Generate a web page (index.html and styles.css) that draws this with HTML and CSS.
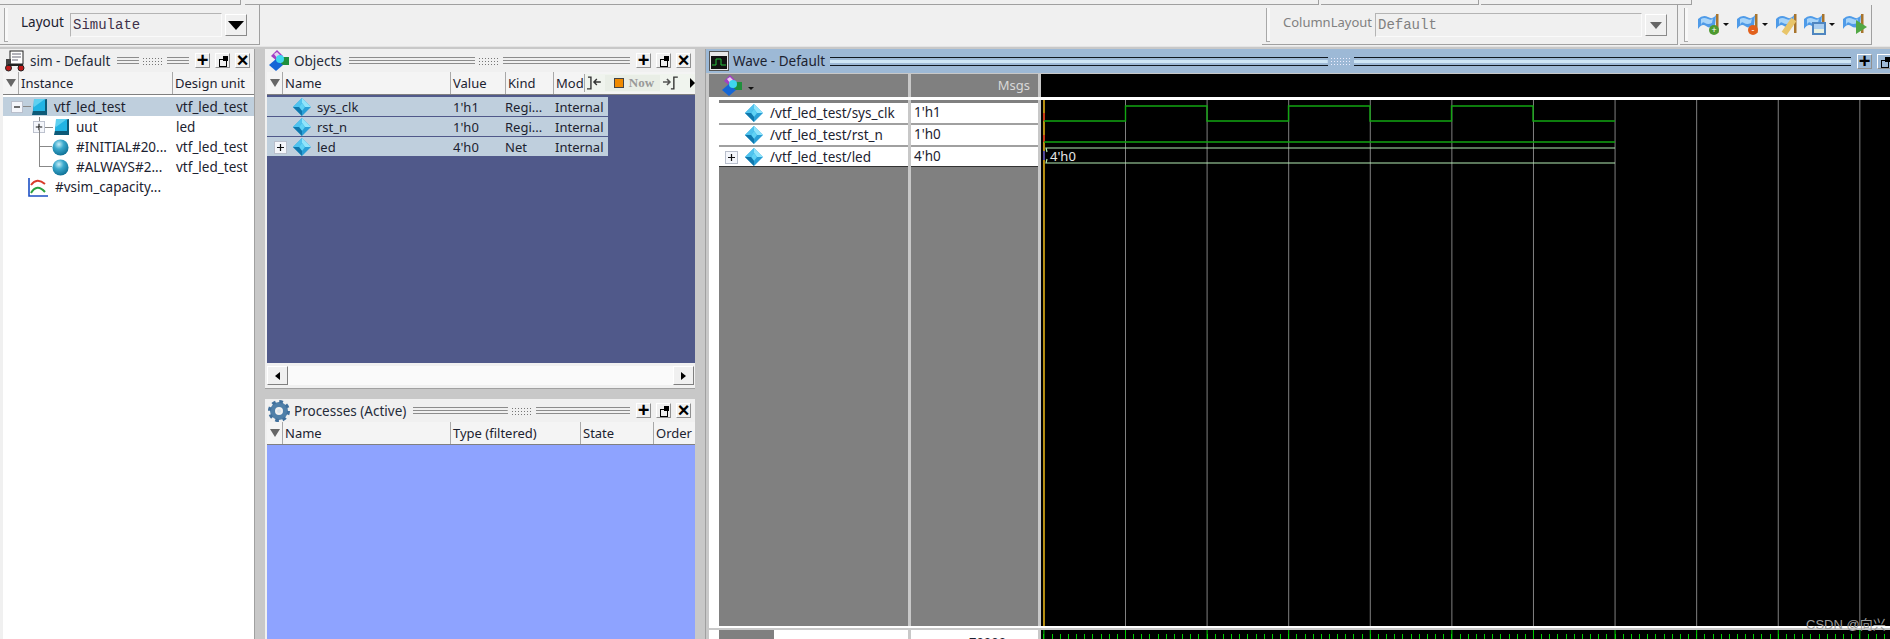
FILE: index.html
```html
<!DOCTYPE html>
<html lang="en">
<head>
  <meta charset="UTF-8" />
  <title>Simulate</title>
  <link rel="stylesheet" href="styles.css">
</head>
<body>
  <svg class="defs" width="0" height="0">
    <defs>
      <symbol id="diamond" viewBox="0 0 20 20">
        <path d="M10 1 L19 10 L10 19 L1 10Z" fill="#2a9fd6"/>
        <path d="M10 1 L19 10 L13 10 L10 6Z" fill="#8fe4fb"/>
        <path d="M10 1 L1 10 L7 10 L10 6Z" fill="#4fc3ee"/>
        <path d="M10 6 L13 10 L10 14 L7 10Z" fill="#5fd2f5"/>
        <path d="M1 10 L10 19 L10 14 L7 10Z" fill="#0f78ad"/>
      </symbol>
      <symbol id="cube" viewBox="0 0 16 16">
        <path d="M1 16 L4 2 L16 0 V16Z" fill="#0d5a78"/>
        <path d="M3 0 H14 V12 H2Z" fill="#22b4e4"/>
        <path d="M3 0 H14 L3 8Z" fill="#5fd0f0"/>
      </symbol>
      <radialGradient id="ball" cx="0.4" cy="0.3" r="0.75">
        <stop offset="0" stop-color="#c8eef7"/>
        <stop offset="0.4" stop-color="#3ba9cd"/>
        <stop offset="1" stop-color="#0b6b90"/>
      </radialGradient>
      <symbol id="sphere" viewBox="0 0 18 18">
        <circle cx="9" cy="9" r="8.5" fill="url(#ball)"/>
      </symbol>
      <symbol id="objects" viewBox="0 0 22 22">
        <path d="M9 0 L15 6 L9 11 L3 6Z" fill="#a23fc4"/>
        <path d="M6 4 L9 2 L12 5 L9 8Z" fill="#e8d0f0"/>
        <path d="M13 7 H21 V15 H13Z" fill="#1f8f3c"/>
        <path d="M8 9 L15 15 L8 21 L1 15Z" fill="#1566d6"/>
        <circle cx="12" cy="9" r="4" fill="#3fd6ee"/>
      </symbol>
      <symbol id="flag" viewBox="0 0 22 20">
        <path d="M0 5 Q5 0 10 3 T18 1 L17 12 Q12 15 8 12 T0 15Z" fill="#4f9be8"/>
        <path d="M3 5 Q6 3 10 5 T15 4 L14 9 Q10 11 7 9 T3 11Z" fill="#a8d4f8"/>
        <path d="M18 0 H20.5 V19 H18Z" fill="#a8742c"/>
      </symbol>
      <symbol id="plusbox" viewBox="0 0 13 13">
        <rect x="0.5" y="0.5" width="12" height="12" fill="#f4f6fb" stroke="#b9bfcc"/>
        <path d="M3 6.5 H10 M6.5 3 V10" stroke="#111" stroke-width="1.2"/>
      </symbol>
    </defs>
  </svg>

  <div class="top-strip">
    <span class="seg s1"></span><span class="seg s2"></span><span class="seg s3"></span><span class="seg s4"></span>
  </div>

  <div class="toolbar">
    <div class="tool tool-layout">
      <span class="handle"></span>
      <span class="tool-label">Layout</span>
      <span class="combo">Simulate</span>
      <span class="drop"><i class="tri"></i></span>
    </div>
    <div class="tool-space"></div>
    <div class="tool tool-column">
      <span class="handle"></span>
      <span class="tool-label muted">ColumnLayout</span>
      <span class="combo combo-wide muted">Default</span>
      <span class="drop"><i class="tri tri-hatch"></i></span>
    </div>
    <div class="tool tool-flags">
      <span class="handle"></span>
      <span class="flag"><svg width="22" height="20"><use href="#flag"/></svg><i class="badge green">+</i></span><i class="caret"></i>
      <span class="flag"><svg width="22" height="20"><use href="#flag"/></svg><i class="badge orange">-</i></span><i class="caret"></i>
      <span class="flag"><svg width="22" height="20"><use href="#flag"/></svg><i class="pencil"></i></span>
      <span class="flag"><svg width="22" height="20"><use href="#flag"/></svg><i class="disk"></i></span><i class="caret"></i>
      <span class="flag"><svg width="22" height="20"><use href="#flag"/></svg><i class="arrow"></i></span>
    </div>
  </div>

  <div class="workspace">
    <section class="panel panel-sim">
      <header class="titlebar">
        <svg class="title-icon" width="22" height="22" viewBox="0 0 22 22">
          <rect x="6" y="1" width="13" height="13" fill="#fff" stroke="#222"/>
          <path d="M8 4 H17 M8 7 H17 M8 10 H14" stroke="#667"/>
          <path d="M2 9 H7 V16 H2Z" fill="#444"/>
          <circle cx="4.5" cy="18" r="3" fill="#c01818" stroke="#222"/>
          <circle cx="17" cy="18" r="3" fill="#c01818" stroke="#222"/>
          <path d="M4 15 H19" stroke="#222" stroke-width="2"/>
        </svg>
        <span class="title-text">sim - Default</span>
        <div class="grip"><span></span><b></b><span></span></div>
        <div class="win-btns"><span class="btn">+</span><span class="btn btn-undock"></span><span class="btn btn-x">×</span></div>
      </header>
      <div class="cols">
        <span class="filter"><i></i></span>
        <span class="col col-instance">Instance</span>
        <span class="col">Design unit</span>
      </div>
      <div class="tree">
        <div class="tree-row selected">
          <svg class="pm pm-root" width="12" height="12"><rect x="0.5" y="0.5" width="11" height="11" fill="#f4f6fb" stroke="#b9bfcc"/><path d="M3 6 H9" stroke="#111" stroke-width="1.2"/></svg>
          <span class="tick"></span>
          <svg class="node" width="16" height="16"><use href="#cube"/></svg>
          <span class="name name-root">vtf_led_test</span>
          <span class="unit">vtf_led_test</span>
        </div>
        <div class="tree-row">
          <span class="stem"></span>
          <svg class="pm pm-child" width="12" height="12"><use href="#plusbox"/></svg>
          <span class="tick"></span>
          <svg class="node" width="16" height="16"><use href="#cube"/></svg>
          <span class="name name-1">uut</span>
          <span class="unit">led</span>
        </div>
        <div class="tree-row">
          <span class="elbow"></span>
          <svg class="node" width="17" height="17"><use href="#sphere"/></svg>
          <span class="name name-1">#INITIAL#20...</span>
          <span class="unit">vtf_led_test</span>
        </div>
        <div class="tree-row">
          <span class="elbow"></span>
          <svg class="node" width="17" height="17"><use href="#sphere"/></svg>
          <span class="name name-1">#ALWAYS#2...</span>
          <span class="unit">vtf_led_test</span>
        </div>
        <div class="tree-row">
          <svg class="node chart" width="20" height="20" viewBox="0 0 20 20">
            <path d="M1 1 V19 H20" stroke="#1c4fc4" stroke-width="1.6" fill="none"/>
            <path d="M3 8 Q9 0 17 7" stroke="#d83a2a" stroke-width="2" fill="none"/>
            <path d="M3 16 Q9 6 17 15" stroke="#2aa040" stroke-width="2" fill="none"/>
          </svg>
          <span class="name">#vsim_capacity...</span>
        </div>
      </div>
    </section>

    <div class="middle">
      <section class="panel panel-objects">
        <header class="titlebar">
          <svg class="title-icon" width="22" height="22"><use href="#objects"/></svg>
          <span class="title-text">Objects</span>
          <div class="grip"><span></span><b></b><span></span></div>
          <div class="win-btns"><span class="btn">+</span><span class="btn btn-undock"></span><span class="btn btn-x">×</span></div>
        </header>
        <div class="cols">
          <span class="filter"><i></i></span>
          <span class="col col-name">Name</span>
          <span class="col col-value">Value</span>
          <span class="col col-kind">Kind</span>
          <span class="col">Mode</span>
          <div class="now-bar">
            <svg width="18" height="16" viewBox="0 0 18 16"><path d="M2 14 H6 V2 H3 M16 7 H9 M12 4 L9 7 L12 10" stroke="#333" stroke-width="1.4" fill="none"/></svg>
            <span class="now"><i></i>Now</span>
            <svg width="18" height="16" viewBox="0 0 18 16"><path d="M1 7 H8 M5 4 L8 7 L5 10" stroke="#555" stroke-width="1.6" fill="none"/><path d="M16 2 H12 V14 H9" stroke="#333" stroke-width="1.4" fill="none"/></svg>
            <i class="next"></i>
          </div>
        </div>
        <div class="objects-list">
          <div class="obj-row"><svg class="obj-ic" width="20" height="20"><use href="#diamond"/></svg><span class="o-name">sys_clk</span><span class="o-val">1'h1</span><span class="o-kind">Regi...</span><span>Internal</span></div>
          <div class="obj-row"><svg class="obj-ic" width="20" height="20"><use href="#diamond"/></svg><span class="o-name">rst_n</span><span class="o-val">1'h0</span><span class="o-kind">Regi...</span><span>Internal</span></div>
          <div class="obj-row"><svg class="pm-obj" width="13" height="13"><use href="#plusbox"/></svg><svg class="obj-ic" width="20" height="20"><use href="#diamond"/></svg><span class="o-name">led</span><span class="o-val">4'h0</span><span class="o-kind">Net</span><span>Internal</span></div>
        </div>
        <div class="hscroll">
          <span class="sb-btn"><i class="tl"></i></span>
          <span class="sb-track"></span>
          <span class="sb-btn"><i class="tr"></i></span>
        </div>
      </section>

      <section class="panel panel-processes">
        <header class="titlebar">
          <svg class="title-icon" width="22" height="22" viewBox="0 0 22 22">
            <circle cx="11" cy="11" r="6.5" fill="none" stroke="#4f7fa8" stroke-width="5"/>
            <circle cx="11" cy="11" r="9.5" fill="none" stroke="#3f6f9c" stroke-width="3" stroke-dasharray="3.7 3.76"/>
            <circle cx="11" cy="11" r="2" fill="#d8e4ee"/>
          </svg>
          <span class="title-text">Processes (Active)</span>
          <div class="grip"><span></span><b></b><span></span></div>
          <div class="win-btns"><span class="btn">+</span><span class="btn btn-undock"></span><span class="btn btn-x">×</span></div>
        </header>
        <div class="cols">
          <span class="filter"><i></i></span>
          <span class="col col-name">Name</span>
          <span class="col col-type">Type (filtered)</span>
          <span class="col col-state">State</span>
          <span class="col">Order</span>
        </div>
        <div class="processes-body"></div>
      </section>
    </div>

    <section class="panel-wave">
      <header class="wave-title">
        <svg class="wave-icon" width="20" height="20" viewBox="0 0 20 20">
          <rect x="0.5" y="0.5" width="19" height="19" fill="#e8e8e8" stroke="#555"/>
          <rect x="2" y="5" width="16" height="13" fill="#111"/>
          <path d="M3 14 H7 V8 H12 V14 H17" stroke="#22c03a" fill="none"/>
        </svg>
        <span class="wave-name">Wave - Default</span>
        <div class="wave-grip"><span></span><b></b><span></span></div>
        <div class="win-btns win-btns-wave"><span class="btn">+</span><span class="btn btn-undock"></span></div>
      </header>

      <div class="wave-body">
        <div class="wave-head">
          <div class="head-names">
            <svg width="22" height="22"><use href="#objects"/></svg><i class="caret caret-lt"></i>
          </div>
          <div class="head-msgs">Msgs</div>
          <div class="head-time"></div>
        </div>

        <div class="wave-main">
          <div class="sig-names">
            <div class="sig-pad"></div>
            <div class="sig-row"><svg width="20" height="20"><use href="#diamond"/></svg><span>/vtf_led_test/sys_clk</span></div>
            <div class="sig-row"><svg width="20" height="20"><use href="#diamond"/></svg><span>/vtf_led_test/rst_n</span></div>
            <div class="sig-row"><svg class="sig-pm" width="13" height="13"><use href="#plusbox"/></svg><svg width="20" height="20"><use href="#diamond"/></svg><span>/vtf_led_test/led</span></div>
          </div>
          <div class="sig-vals">
            <div class="sig-pad"></div>
            <div class="val-row">1'h1</div>
            <div class="val-row">1'h0</div>
            <div class="val-row">4'h0</div>
          </div>
          <div class="wave-plot">
            <svg width="849" height="526" viewBox="1041 100 849 526">
              <path d="M1044 100 V626" stroke="#e8b000" stroke-width="1.4"/>
              <path d="M1044 113 V121 M1044 135 V142" stroke="#d01818" stroke-width="1.4"/>
              <path d="M1044 151 V160" stroke="#2a2ad0" stroke-width="1.4"/>
              <path d="M1044 121 H1125.5 V106 H1207 V121 H1288.5 V106 H1370 V121 H1451.5 V106 H1533 V121 H1615" stroke="#12a612" stroke-width="1.4" fill="none"/>
              <path d="M1044 142 H1615" stroke="#12a612" stroke-width="1.4"/>
              <path d="M1047 152 L1046 148 H1615 M1047 159 L1046 163 H1615" stroke="#b4ecb4" stroke-width="1.2" fill="none"/>
              <text x="1050" y="161" class="bus-text">4'h0</text>
            </svg>
          </div>
        </div>

        <div class="wave-foot">
          <div class="foot-names"><span class="foot-icons"></span><span class="foot-now">Now</span></div>
          <div class="foot-vals">70000 ns</div>
          <div class="foot-ticks"></div>
        </div>
      </div>
    </section>
  </div>

  <div class="watermark">CSDN @向兴</div>
</body>
</html>
```

FILE: styles.css
```css
* {
  box-sizing: border-box;
}

body {
  margin: 0;
  width: 1890px;
  height: 639px;
  overflow: hidden;
  position: relative;
  background: #f0f0f0;
  font-family: "Noto Sans", "Liberation Sans", sans-serif;
  font-size: 13px;
  color: #1c2230;
}

.defs {
  position: absolute;
}

i {
  font-style: normal;
}

/* top toolbars */
.top-strip {
  height: 5px;
  display: flex;
}

.seg {
  height: 5px;
  border-bottom: 1px solid #a0a0a0;
  border-right: 1px solid #a0a0a0;
  margin-right: 2px;
}

.s1 { width: 241px; margin-right: 4px; }
.s2 { width: 1074px; }
.s3 { width: 158px; }
.s4 { width: 211px; }

.toolbar {
  height: 40px;
  display: flex;
}

.tool {
  display: flex;
  align-items: center;
  border-right: 1px solid #a0a0a0;
  border-bottom: 1px solid #a0a0a0;
  padding-left: 4px;
}

.tool-layout {
  width: 260px;
}

.tool-space {
  width: 1002px;
}

.tool-column {
  width: 416px;
}

.tool-flags {
  width: 192px;
  margin-left: 2px;
}

.handle {
  width: 4px;
  height: 34px;
  flex-shrink: 0;
  border-left: 1px solid #a8a8a8;
  border-bottom: 1px solid #a8a8a8;
  background: #f8f8f8;
}

.tool-label {
  margin-left: 13px;
  width: 42px;
  font-size: 13.5px;
  line-height: 14px;
  margin-top: -5px;
  white-space: nowrap;
}

.tool-column .tool-label {
  width: 85px;
  font-size: 13px;
}

.muted {
  color: #808080;
}

.combo {
  width: 152px;
  height: 24px;
  margin-left: 7px;
  border: 1px solid #b4b4b4;
  border-right-color: #fafafa;
  border-bottom-color: #fafafa;
  padding: 3px 2px;
  font-family: "Liberation Mono", monospace;
  font-size: 14px;
  line-height: 16px;
  color: #40304a;
}

.combo-wide {
  width: 267px;
  color: #808080;
}

.drop {
  width: 22px;
  height: 22px;
  margin-left: 3px;
  background: #f0f0f0;
  border: 1px solid #fff;
  border-right-color: #8a8a8a;
  border-bottom-color: #8a8a8a;
  display: flex;
  align-items: center;
  justify-content: center;
}

.tri {
  width: 0;
  height: 0;
  border-left: 8px solid transparent;
  border-right: 8px solid transparent;
  border-top: 9px solid #000;
  margin-top: 2px;
}

.tri-hatch {
  border-left-width: 6px;
  border-right-width: 6px;
  border-top: 7px solid #666;
}

.flag {
  position: relative;
  width: 22px;
  height: 20px;
  margin-left: 8px;
  margin-top: -1px;
}

.flag:nth-child(2) {
  margin-left: 10px;
}

.flag svg {
  display: block;
}

.flag + .flag {
  margin-left: 6px;
}

.flag + .caret {
  margin-left: 3px;
}

.caret {
  width: 0;
  height: 0;
  border-left: 3px solid transparent;
  border-right: 3px solid transparent;
  border-top: 3px solid #111;
}

.badge {
  position: absolute;
  right: 1px;
  bottom: -1px;
  width: 10px;
  height: 10px;
  border-radius: 50%;
  color: #fff;
  font-size: 9px;
  line-height: 9px;
  text-align: center;
}

.green { background: #4d9a30; }
.orange { background: #e2601c; }

.pencil {
  position: absolute;
  right: 6px;
  bottom: -1px;
  width: 6px;
  height: 17px;
  background: #e8c56a;
  transform: rotate(35deg);
}

.disk {
  position: absolute;
  right: 0;
  bottom: -1px;
  width: 14px;
  height: 13px;
  background: linear-gradient(#a8cdf0 55%, #e8f0e0 55%);
  border: 2px solid #4f86c0;
}

.arrow {
  position: absolute;
  right: -2px;
  bottom: 0;
  width: 0;
  height: 0;
  border-left: 11px solid #52a844;
  border-top: 7px solid transparent;
  border-bottom: 7px solid transparent;
}

/* workspace */
.workspace {
  height: 594px;
  margin-top: 1px;
  padding-top: 2px;
  display: flex;
  background: #c8c8c8;
  border-top: 1px solid #e4e4e4;
}

.panel {
  background: #f0f0f0;
  display: flex;
  flex-direction: column;
}

.panel-sim {
  width: 255px;
  padding-left: 3px;
  border-right: 1px solid #a0a0a0;
}

.middle {
  width: 430px;
  margin-left: 10px;
  display: flex;
  flex-direction: column;
}

.panel-objects {
  height: 340px;
  border-bottom: 1px solid #a0a0a0;
  padding-left: 2px;
}

.panel-processes {
  flex: 1;
  margin-top: 10px;
  padding-left: 2px;
}

.titlebar {
  height: 23px;
  display: flex;
  align-items: center;
  flex-shrink: 0;
}

.title-icon {
  margin-left: 1px;
  flex-shrink: 0;
}

.title-text {
  margin-left: 4px;
  font-size: 13.5px;
  white-space: nowrap;
  color: #252b3a;
}

.grip {
  flex: 1;
  display: flex;
  align-items: center;
  margin-left: 7px;
  gap: 3px;
}

.grip span {
  flex: 1;
  height: 7px;
  border-top: 1px solid #8c8c8c;
  border-bottom: 1px solid #8c8c8c;
  background: linear-gradient(#8c8c8c, #8c8c8c) center / 100% 1px no-repeat;
}

.grip b {
  width: 22px;
  height: 8px;
  background: radial-gradient(circle, #777 0.6px, transparent 0.9px) 0 0 / 3px 3px;
}

.win-btns {
  display: flex;
  gap: 5px;
  margin-left: 6px;
  margin-right: 4px;
}

.win-btns-wave {
  margin-right: -2px;
}

.btn {
  width: 15px;
  height: 15px;
  border: 1px solid #fff;
  border-right-color: #909090;
  border-bottom-color: #909090;
  font-size: 20px;
  font-weight: 700;
  line-height: 13px;
  text-align: center;
  color: #000;
  font-family: "Liberation Sans", sans-serif;
  position: relative;
}

.btn-undock::before {
  content: "";
  position: absolute;
  left: 3px;
  top: 5px;
  width: 6px;
  height: 6px;
  border: 1px solid #000;
}

.btn-undock::after {
  content: "";
  position: absolute;
  left: 7px;
  top: 2px;
  width: 5px;
  height: 5px;
  background: #000;
}

.cols {
  height: 23px;
  display: flex;
  flex-shrink: 0;
  position: relative;
  border-bottom: 1px solid #808080;
  background: #f4f4f4;
  overflow: hidden;
}

.filter {
  width: 16px;
  border-right: 1px solid #a8a8a8;
  display: flex;
  justify-content: center;
  padding-top: 7px;
}

.filter i {
  width: 0;
  height: 0;
  border-left: 5px solid transparent;
  border-right: 5px solid transparent;
  border-top: 8px solid #666;
}

.col {
  padding-left: 2px;
  border-right: 1px solid #a8a8a8;
  line-height: 22px;
  white-space: nowrap;
  overflow: hidden;
}

.col:last-of-type {
  border-right: 0;
  flex: 1;
}

.col-instance { width: 154px; }
.col-name { width: 168px; }
.col-value { width: 55px; }
.col-kind { width: 48px; }
.col-type { width: 130px; }
.col-state { width: 73px; }

.tree {
  flex: 1;
  background: #fff;
  padding-top: 2px;
  font-size: 13.5px;
}

.tree-row {
  height: 20px;
  display: flex;
  align-items: center;
  position: relative;
}

.selected {
  background: #bfcfdd;
  height: 19px;
  margin-bottom: 1px;
}

.pm-root {
  margin-left: 8px;
}

.pm-child {
  margin-left: 30px;
}

.tick {
  width: 8px;
  height: 1px;
  background: #888;
}

.stem {
  position: absolute;
  left: 36px;
  top: 0;
  width: 1px;
  height: 4px;
  background: #888;
}

.elbow {
  width: 13px;
  height: 20px;
  margin-left: 36px;
  margin-top: -20px;
  border-left: 1px solid #888;
  border-bottom: 1px solid #888;
}

.name {
  white-space: nowrap;
}

.name-root {
  margin-left: 7px;
  width: 120px;
}

.name-1 {
  margin-left: 7px;
  width: 100px;
}

.unit {
  position: absolute;
  left: 173px;
}

.node {
  flex-shrink: 0;
}

.chart {
  margin-left: 25px;
  margin-right: 7px;
}

.now-bar {
  position: absolute;
  left: 317px;
  top: 2px;
  right: 0;
  height: 18px;
  display: flex;
  align-items: center;
  background: #f0f4ee;
  border-left: 1px solid #a8a8a8;
  gap: 2px;
}

.now {
  width: 56px;
  font-family: "Liberation Serif", serif;
  font-weight: 700;
  font-size: 13px;
  color: #999;
  display: flex;
  align-items: center;
  gap: 5px;
  background: #e9eee6;
  padding-left: 9px;
}

.now i {
  width: 10px;
  height: 10px;
  background: #f08a00;
  border: 1px solid #444;
}

.next {
  width: 0;
  height: 0;
  margin-left: 8px;
  border-left: 5px solid #000;
  border-top: 5px solid transparent;
  border-bottom: 5px solid transparent;
}

.objects-list {
  flex: 1;
  background: #50598a;
  padding-top: 2px;
}

.obj-row {
  width: 341px;
  height: 19px;
  margin-bottom: 1px;
  background: #bfcfdd;
  display: flex;
  align-items: center;
  position: relative;
  white-space: nowrap;
}

.obj-ic {
  position: absolute;
  left: 25px;
}

.pm-obj {
  position: absolute;
  left: 7px;
  top: 4px;
}

.o-name {
  margin-left: 50px;
  width: 136px;
}

.o-val {
  width: 52px;
}

.o-kind {
  width: 50px;
}

.hscroll {
  height: 25px;
  display: flex;
  align-items: center;
  flex-shrink: 0;
  padding-right: 1px;
}

.sb-btn {
  width: 21px;
  height: 19px;
  background: #f0f0f0;
  border: 1px solid #fff;
  border-right-color: #808080;
  border-bottom-color: #808080;
  display: flex;
  align-items: center;
  justify-content: center;
}

.sb-track {
  flex: 1;
  height: 19px;
  background: #fafafa;
}

.tl, .tr {
  width: 0;
  height: 0;
  border-top: 4px solid transparent;
  border-bottom: 4px solid transparent;
}

.tl { border-right: 5px solid #000; }
.tr { border-left: 5px solid #000; }

.processes-body {
  flex: 1;
  background: #8ea3ff;
}

/* wave window */
.panel-wave {
  flex: 1;
  margin-left: 10px;
  min-width: 0;
  background: #c8c8c8;
  display: flex;
  flex-direction: column;
  border-left: 1px solid #a0a0a0;
  overflow: hidden;
}

.wave-title {
  height: 24px;
  display: flex;
  align-items: center;
  background: #9db9d6;
  flex-shrink: 0;
}

.wave-icon {
  margin-left: 3px;
}

.wave-name {
  margin-left: 4px;
  font-size: 13.5px;
  white-space: nowrap;
}

.wave-grip {
  flex: 1;
  display: flex;
  align-items: center;
  margin-left: 5px;
  gap: 2px;
}

.wave-grip span {
  flex: 1;
  height: 9px;
  border-top: 1px solid #101820;
  border-bottom: 1px solid #101820;
  background: linear-gradient(#cfe6f5, #cfe6f5) center / 100% 3px no-repeat;
}

.wave-grip b {
  width: 22px;
  height: 9px;
  background: radial-gradient(circle, #eef 0.7px, transparent 1px) 0 0 / 3px 3px;
}

.wave-body {
  flex: 1;
  margin-left: 3px;
  display: flex;
  flex-direction: column;
  min-height: 0;
}

.wave-head {
  height: 26px;
  margin-top: 1px;
  display: flex;
  flex-shrink: 0;
  border-bottom: 3px solid #fff;
}

.head-names {
  width: 199px;
  background: #808080;
  padding-left: 12px;
  display: flex;
  align-items: center;
}

.caret-lt {
  margin-left: 5px;
  margin-top: 5px;
}

.head-msgs {
  width: 127px;
  margin-left: 3px;
  background: #808080;
  color: #d8d8d8;
  text-align: right;
  padding-right: 8px;
  line-height: 23px;
}

.head-time {
  flex: 1;
  margin-left: 3px;
  background: #000;
}

.wave-main {
  height: 526px;
  display: flex;
  flex-shrink: 0;
}

.sig-names {
  width: 199px;
  padding-left: 10px;
  background: linear-gradient(#fff, #fff) left / 10px 100% no-repeat, #808080;
}

.sig-vals {
  width: 127px;
  margin-left: 3px;
  background: #808080;
}

.sig-pad {
  height: 3px;
}

.sig-row {
  height: 22px;
  background: #fff;
  border-bottom: 2px solid #a0a0a0;
  display: flex;
  align-items: center;
  padding-left: 25px;
  position: relative;
  white-space: nowrap;
  font-size: 13.5px;
}

.sig-row:last-child,
.val-row:last-child {
  height: 20px;
  border-bottom: 1px solid #333;
}

.sig-row span {
  margin-left: 6px;
}

.sig-pm {
  position: absolute;
  left: 6px;
  top: 4px;
}

.val-row {
  height: 22px;
  background: #fff;
  border-bottom: 2px solid #a0a0a0;
  padding-left: 3px;
  line-height: 19px;
  font-size: 13.5px;
}

.wave-plot {
  flex: 1;
  margin-left: 3px;
  background-color: #000;
  background-image: linear-gradient(to right, #808080 1px, transparent 1px);
  background-size: 81.6px 100%;
  background-position: 84px 0;
  overflow: hidden;
}

.wave-plot svg {
  display: block;
}

.bus-text {
  fill: #e8e8e8;
  font-family: "Noto Sans", sans-serif;
  font-size: 13px;
}

.wave-foot {
  flex: 1;
  padding-top: 2px;
  display: flex;
  background: #c8c8c8;
  border-top: 2px solid #fff;
}

.foot-names {
  width: 199px;
  background: #fff;
  position: relative;
  overflow: hidden;
  display: flex;
}

.foot-icons {
  width: 55px;
  margin-left: 10px;
  background: #808080;
}

.foot-now {
  position: absolute;
  left: 158px;
  top: 4px;
}

.foot-vals {
  width: 127px;
  margin-left: 3px;
  background: #fff;
  padding-left: 58px;
  line-height: 16px;
  padding-top: 4px;
  overflow: hidden;
  white-space: nowrap;
}

.foot-ticks {
  flex: 1;
  margin-left: 3px;
  background-color: #000;
  background-image:
    linear-gradient(to right, #00d000 1px, transparent 1px),
    repeating-linear-gradient(to right, transparent 0 2.4px, #00d000 2.4px 3.4px, transparent 3.4px 8.16px);
  background-size: 81.6px 100%, 100% 5px;
  background-position: 84px 0, 0 4px;
  background-repeat: repeat-x, no-repeat;
}

.watermark {
  position: absolute;
  left: 1806px;
  top: 614px;
  color: #9a9a9a;
  font-family: "Liberation Sans", "Noto Sans CJK SC", sans-serif;
  font-size: 13px;
}
```
